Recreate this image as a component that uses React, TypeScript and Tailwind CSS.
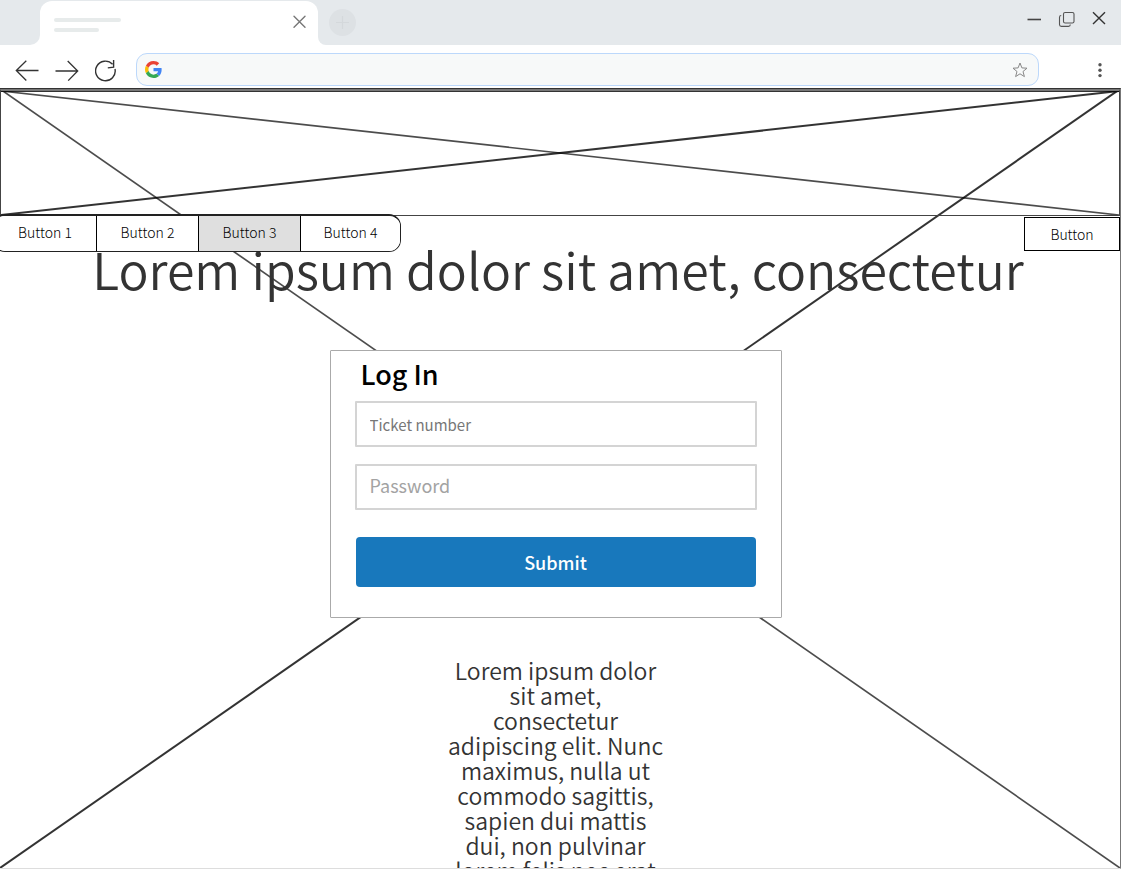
import React from "react";

const tabs = [
  { label: "Button 1", style: "w-[102px] bg-white" },
  { label: "Button 2", style: "w-[102px] border-l bg-white" },
  { label: "Button 3", style: "w-[102px] border-l bg-[#dfdfdf]" },
  { label: "Button 4", style: "w-[100px] border-l bg-white" },
];

function GoogleLogo() {
  return (
    <svg width="17" height="17" viewBox="0 0 48 48" aria-hidden="true">
      <path fill="#EA4335" d="M24 9.5c3.54 0 6.71 1.22 9.21 3.6l6.85-6.85C35.9 2.38 30.47 0 24 0 14.62 0 6.51 5.38 2.56 13.22l7.98 6.19C12.43 13.72 17.74 9.5 24 9.5z" />
      <path fill="#4285F4" d="M46.98 24.55c0-1.57-.15-3.09-.38-4.55H24v9.02h12.94c-.58 2.96-2.26 5.48-4.78 7.18l7.73 6c4.51-4.18 7.09-10.36 7.09-17.65z" />
      <path fill="#FBBC05" d="M10.53 28.59c-.48-1.45-.76-2.99-.76-4.59s.27-3.14.76-4.59l-7.98-6.19C.92 16.46 0 20.12 0 24c0 3.88.92 7.54 2.56 10.78l7.97-6.19z" />
      <path fill="#34A853" d="M24 48c6.48 0 11.93-2.13 15.89-5.81l-7.73-6c-2.15 1.45-4.92 2.3-8.16 2.3-6.26 0-11.57-4.22-13.47-9.91l-7.98 6.19C6.51 42.62 14.62 48 24 48z" />
    </svg>
  );
}

function BrowserHeader() {
  return (
    <header className="shrink-0">
      <div className="flex h-[45px] justify-between bg-[#e5e9ec]">
        <div className="flex">
          <div className="flex w-10 items-end bg-white">
            <div className="h-full w-full rounded-br-[10px] bg-[#e5e9ec]" />
          </div>
          <div className="bg-[#e5e9ec]">
            <div className="mt-px flex h-11 w-[278px] items-start justify-between rounded-t-xl bg-white pt-[13px] pr-[11px] pl-[14px]">
              <div className="flex flex-col gap-[6px] pt-1">
                <div className="h-1 w-[67px] rounded-full bg-[#e7ebeb]" />
                <div className="h-1 w-[45px] rounded-full bg-[#e7ebeb]" />
              </div>
              <button type="button" aria-label="Close tab">
                <svg width="15" height="15" viewBox="0 0 15 15" stroke="#777" strokeWidth="1.4" strokeLinecap="round">
                  <path d="M2 2.2L13 13.2M13 2.2L2 13.2" />
                </svg>
              </button>
            </div>
          </div>
          <div className="w-2 bg-white">
            <div className="h-full w-full rounded-bl-[8px] bg-[#e5e9ec]" />
          </div>
          <button type="button" aria-label="New tab" className="mt-[9px] ml-[3px] h-[27px]">
            <svg width="27" height="27" viewBox="0 0 27 27">
              <circle cx="13.5" cy="13.5" r="13.5" fill="#dde1e4" />
              <path d="M13.5 7v13M7 13.5h13" stroke="#d4d8db" strokeWidth="1.2" />
            </svg>
          </button>
        </div>
        <div className="flex h-[38px] items-center gap-4 pr-[14px]">
          <button type="button" aria-label="Minimize">
            <svg width="16" height="16" viewBox="0 0 16 16"><path d="M1.5 8.5h13.5" stroke="#444" strokeWidth="1.6" /></svg>
          </button>
          <button type="button" aria-label="Restore">
            <svg width="17" height="16" viewBox="0 0 17 16" fill="none" stroke="#555" strokeWidth="1.1">
              <rect x="5.5" y="1.5" width="10.5" height="10.5" rx="1.6" />
              <path d="M3.2 4.5Q1.5 4.5 1.5 6.2V13.6Q1.5 15.4 3.3 15.4H10.5Q12.3 15.4 12.3 13.5" />
            </svg>
          </button>
          <button type="button" aria-label="Close window">
            <svg width="16" height="16" viewBox="0 0 16 16" stroke="#333" strokeWidth="1.4"><path d="M2 1.3L14 13.1M14 1.3L2 13.1" /></svg>
          </button>
        </div>
      </div>
      <div className="flex h-[43px] items-center bg-white pt-[6px] pr-[15px] pl-[15px]">
        <div className="flex gap-[15px]">
          <button type="button" aria-label="Back">
            <svg width="25" height="23" viewBox="0 0 25 23" fill="none" stroke="#333" strokeWidth="1.3">
              <path d="M23.5 12.5H1.3M11.3 2.8L1.3 12.5L11.3 22.5" />
            </svg>
          </button>
          <button type="button" aria-label="Forward">
            <svg width="25" height="23" viewBox="0 0 25 23" fill="none" stroke="#333" strokeWidth="1.3">
              <path d="M.5 13H22.7M12.7 3L22.7 13L13.2 22.6" />
            </svg>
          </button>
          <button type="button" aria-label="Reload">
            <svg width="22" height="25" viewBox="0 0 22 25" fill="none" stroke="#333" strokeWidth="1.4">
              <path d="M17.6 7.3A9.8 9.8 0 1 0 20 12" />
              <path d="M18.6 3V10.1L12.8 10.9" />
            </svg>
          </button>
        </div>
        <div className="ml-[19px] flex h-[33px] flex-1 items-center rounded-[11px] border border-[#bcd8fb] bg-[#f7f9f9] px-2">
          <GoogleLogo />
          <input aria-label="Address" className="min-w-0 flex-1 bg-transparent px-2 text-sm outline-none" />
          <button type="button" aria-label="Bookmark" className="mr-[2px]">
            <svg width="16" height="16" viewBox="0 0 16 16" fill="none" stroke="#888" strokeWidth="1">
              <path d="M8 1L9.9 5.9L15 6.2L11 9.5L12.4 14.6L8 11.8L3.6 14.6L5 9.5L1 6.2L6.1 5.9Z" />
            </svg>
          </button>
        </div>
        <button type="button" aria-label="Menu" className="ml-[55px]">
          <svg width="12" height="16" viewBox="0 0 12 16" fill="#555">
            <circle cx="6" cy="2.8" r="1.7" />
            <circle cx="6" cy="8.2" r="1.7" />
            <circle cx="6" cy="13.6" r="1.7" />
          </svg>
        </button>
      </div>
    </header>
  );
}

function Cross() {
  return (
    <svg className="absolute inset-0 h-full w-full" preserveAspectRatio="none" viewBox="0 0 100 100" stroke="#000" aria-hidden="true">
      <line x1="0" y1="0" x2="100" y2="100" strokeWidth="1.7" strokeOpacity="0.7" vectorEffect="non-scaling-stroke" />
      <line x1="100" y1="0" x2="0" y2="100" strokeWidth="2" strokeOpacity="0.8" vectorEffect="non-scaling-stroke" />
    </svg>
  );
}

export default function App() {
  return (
    <div className="flex h-screen flex-col bg-white pr-1 pb-[6px] font-['Noto_Sans_CJK_SC',sans-serif]">
      <BrowserHeader />
      <main className="relative flex min-h-0 flex-1 flex-col overflow-hidden border-t border-r border-b border-t-[#333] border-r-[#777] border-b-[#ddd]">
        <Cross />
        <div className="relative h-[127px] shrink-0 border border-t-2 border-[#444] border-t-[#777] shadow-[inset_0_1px_0_#333]">
          <Cross />
        </div>
        <div className="relative z-10 -mt-[2px] -ml-[7px] flex h-[38px] shrink-0 items-start justify-between">
          <nav className="flex h-[38px] overflow-hidden rounded-xl border border-t-2 border-[#222] bg-white">
            {tabs.map((tab) => (
              <button
                key={tab.label}
                type="button"
                className={`border-black pb-1 text-[14px] leading-5 font-light text-black ${tab.style}`}
              >
                {tab.label}
              </button>
            ))}
          </nav>
          <button type="button" className="mt-[3px] h-[34px] w-24 border border-black bg-white text-[14px] leading-5 font-light text-black">
            Button
          </button>
        </div>
        <h1 className="relative -mt-3 shrink-0 pr-1 text-center text-[50px] leading-[56px] font-[350] whitespace-nowrap text-[#333]">
          Lorem ipsum dolor sit amet, consectetur
        </h1>
        <div className="relative mt-[54px] flex shrink-0 flex-col items-center pr-[9px]">
          <form
            onSubmit={(e) => e.preventDefault()}
            className="flex w-full max-w-[452px] flex-col rounded-[1px] border border-[#aaa] bg-white px-6 pt-[5px] pb-[30px]"
          >
            <h2 className="pl-[6px] text-[27px] leading-9 font-medium text-black">Log In</h2>
            <input
              aria-label="Ticket number"
              placeholder="Ticket number"
              className="mt-[9px] h-[46px] rounded-[1px] border-2 border-[#d4d4d4] bg-white px-[13px] text-[15px] outline-none placeholder:text-[#777]"
            />
            <input
              aria-label="Password"
              type="password"
              placeholder="Password"
              className="mt-[17px] h-[46px] rounded-[1px] border-2 border-[#d4d4d4] bg-white px-[13px] pb-1 text-[18px] outline-none placeholder:text-[#a3a3a3]"
            />
            <button type="submit" className="mx-px mt-[27px] h-[50px] rounded bg-[#1878bc] text-[18px] font-medium text-white">
              Submit
            </button>
          </form>
          <p className="mt-10 w-[216px] text-center text-[23px] leading-[25px] font-[350] text-[#333]">
            Lorem ipsum dolor sit amet, consectetur adipiscing elit. Nunc maximus, nulla ut commodo sagittis, sapien dui mattis dui, non pulvinar lorem felis nec erat
          </p>
        </div>
      </main>
    </div>
  );
}
